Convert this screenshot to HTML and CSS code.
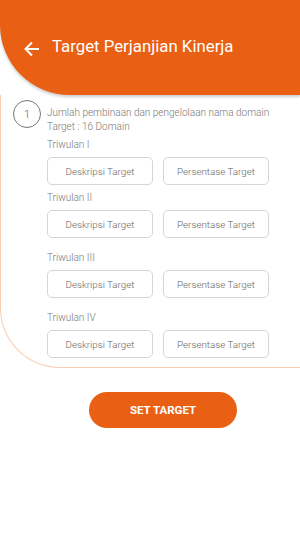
FILE: index.html
```html
<html>
<head>
	<link rel="stylesheet" href="styles.css">
</head>

<body>
	<div class="header">
		<svg class="back" width="16" height="16" viewBox="0 0 16 16">
			<path d="M15 8H2M8 1.5L1.5 8L8 14.5" fill="none" stroke="#fff" stroke-width="2"/>
		</svg>
		<span class="title">Target Perjanjian Kinerja</span>
	</div>

	<div class="card">
		<div class="item">
			<span class="num">1</span>
			<div class="item-body">
				<div class="desc">Jumlah pembinaan dan pengelolaan nama domain</div>
				<div class="desc">Target : 16 Domain</div>

				<div class="quarter q1">
					<div class="label">Triwulan I</div>
					<div class="row">
						<button type="button" class="field">Deskripsi Target</button>
						<button type="button" class="field">Persentase Target</button>
					</div>
				</div>
				<div class="quarter q2">
					<div class="label">Triwulan II</div>
					<div class="row">
						<button type="button" class="field">Deskripsi Target</button>
						<button type="button" class="field">Persentase Target</button>
					</div>
				</div>
				<div class="quarter">
					<div class="label">Triwulan III</div>
					<div class="row">
						<button type="button" class="field">Deskripsi Target</button>
						<button type="button" class="field">Persentase Target</button>
					</div>
				</div>
				<div class="quarter">
					<div class="label">Triwulan IV</div>
					<div class="row">
						<button type="button" class="field">Deskripsi Target</button>
						<button type="button" class="field">Persentase Target</button>
					</div>
				</div>
			</div>
		</div>
	</div>

	<button type="button" class="button-set">SET TARGET</button>
</body>

</html>
```

FILE: styles.css
```css
body{
	margin: 0;
	background-color: white;
	font-family: Roboto, "Liberation Sans", sans-serif;
}

.header{
	position: relative;
	z-index: 2;
	height: 95px;
	background-color: #e95f14;
	border-bottom-left-radius: 70px;
	box-shadow: 0 2px 3px rgba(0,0,0,0.2);
	display: flex;
	align-items: center;
	padding-left: 24px;
	box-sizing: border-box;
}

.back{
	margin-top: 3px;
}

.title{
	color: white;
	font-size: 16.8px;
	margin-left: 12px;
	margin-top: -3px;
}

.card{
	border-left: 1px solid #f9cdb0;
	border-bottom: 1px solid #f9cdb0;
	border-bottom-left-radius: 60px;
	padding: 5px 0 9px 12px;
}

.item{
	display: flex;
}

.num{
	width: 26px;
	height: 26px;
	border: 1px solid #777;
	border-radius: 50%;
	display: flex;
	align-items: center;
	justify-content: center;
	font-size: 11px;
	font-weight: 300;
	color: #666;
	flex-shrink: 0;
}

.item-body{
	margin-left: 6px;
	padding-top: 6px;
}

.desc, .label{
	font-size: 10px;
	font-weight: 300;
	line-height: 14px;
	color: #777;
}

.quarter{
	margin-top: 13px;
}

.q1{
	margin-top: 4px;
}

.q2{
	margin-top: 6px;
}

.row{
	display: flex;
	gap: 10px;
	margin-top: 5px;
}

.field{
	width: 106px;
	height: 28px;
	background: white;
	border: 1px solid #d3d6d8;
	border-radius: 5px;
	font-family: Roboto, "Liberation Sans", sans-serif;
	font-size: 9.8px;
	font-weight: 300;
	color: #666;
	padding: 0;
}

.button-set{
	display: block;
	margin: 24px 0 0 89px;
	width: 148px;
	height: 36px;
	border: none;
	border-radius: 18px;
	background-color: #e95f14;
	color: white;
	font-family: Roboto, "Liberation Sans", sans-serif;
	font-weight: bold;
	font-size: 11.5px;
}
```
